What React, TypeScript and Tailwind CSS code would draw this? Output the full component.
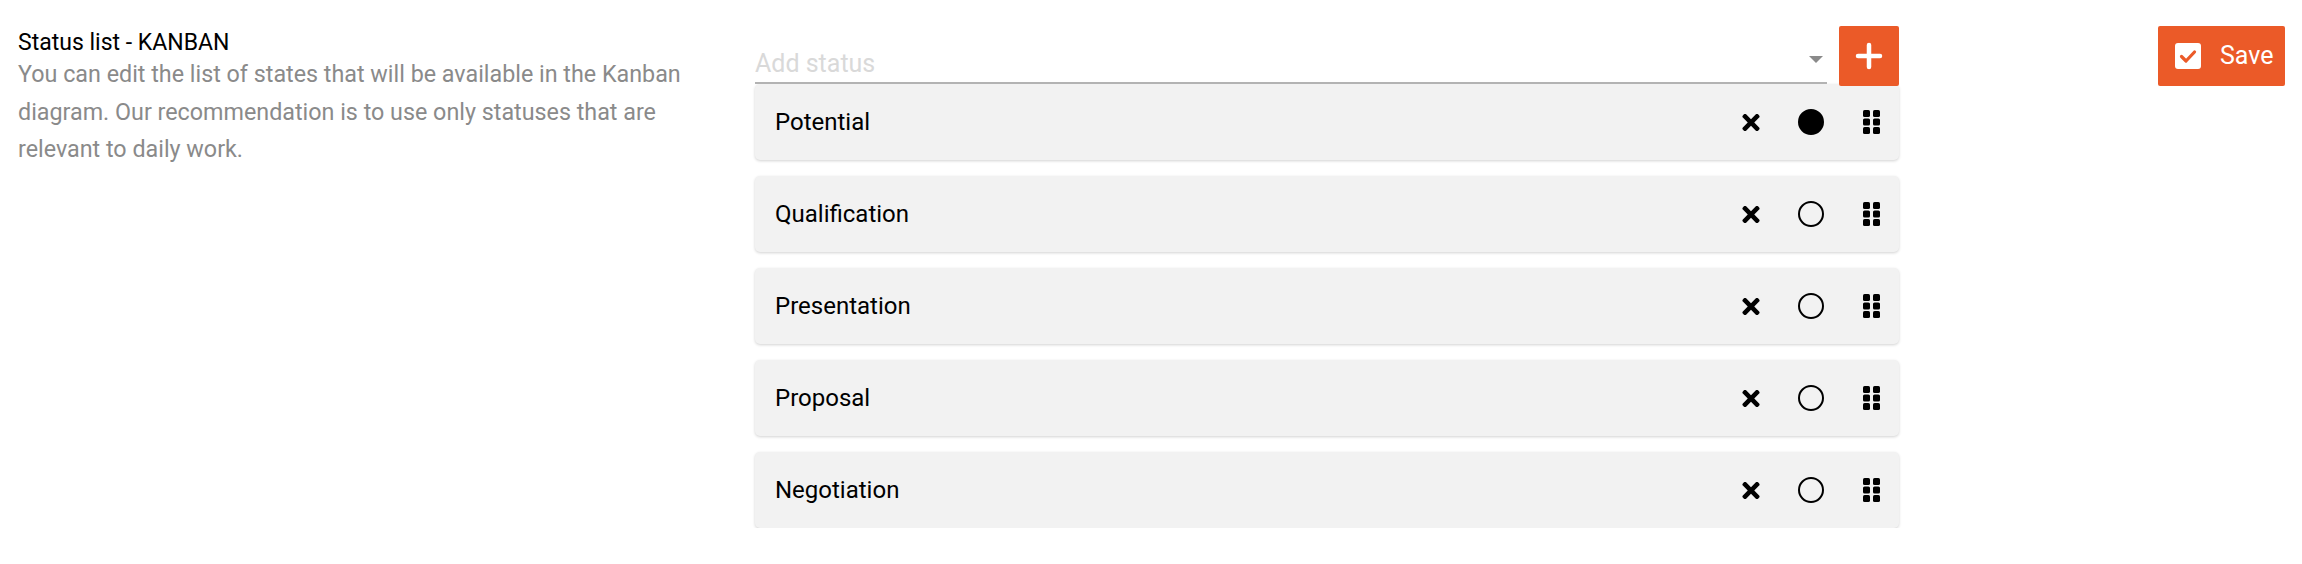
import React from 'react';
import { FaTimes } from 'react-icons/fa';

type Status = {
  id: string;
  name: string;
  active: boolean;
};

const statuses: Status[] = [
  { id: '1', name: 'Potential', active: true },
  { id: '2', name: 'Qualification', active: false },
  { id: '3', name: 'Presentation', active: false },
  { id: '4', name: 'Proposal', active: false },
  { id: '5', name: 'Negotiation', active: false },
];

const GripIcon = () => (
  <svg width="17" height="24" viewBox="0 0 17 24" fill="#000">
    <rect x="0" y="0" width="7" height="7" rx="1.6" />
    <rect x="10" y="0" width="7" height="7" rx="1.6" />
    <rect x="0" y="8.5" width="7" height="7" rx="1.6" />
    <rect x="10" y="8.5" width="7" height="7" rx="1.6" />
    <rect x="0" y="17" width="7" height="7" rx="1.6" />
    <rect x="10" y="17" width="7" height="7" rx="1.6" />
  </svg>
);

const CircleIcon = ({ filled }: { filled: boolean }) => (
  <svg width="28" height="28" viewBox="0 0 28 28">
    <circle cx="14" cy="14" r="12" fill={filled ? '#000' : 'none'} stroke="#000" strokeWidth="2" />
  </svg>
);

const PlusIcon = () => (
  <svg width="28" height="28" viewBox="0 0 28 28" stroke="#fff" strokeWidth="4.5" strokeLinecap="round">
    <line x1="14" y1="3" x2="14" y2="25" />
    <line x1="3" y1="14" x2="25" y2="14" />
  </svg>
);

const CheckBoxIcon = () => (
  <svg width="26" height="26" viewBox="0 0 26 26">
    <rect x="0" y="0" width="26" height="26" rx="3" fill="#fff" />
    <path d="M6.5 13.5 L11 18 L19.5 9" fill="none" stroke="#eb5a28" strokeWidth="3.2" strokeLinecap="round" strokeLinejoin="round" />
  </svg>
);

const StatusRow = ({ status }: { status: Status }) => (
  <div className="flex h-[76px] items-center rounded-[5px] bg-[#f2f2f2] pl-[20px] pr-[19px] shadow-[0_1px_3px_rgba(0,0,0,0.18)]">
    <span className="flex-1 text-[24px] text-black">{status.name}</span>
    <div className="flex items-center">
      <button className="flex w-[20px] justify-center">
        <FaTimes size={25} color="#000" />
      </button>
      <button className="ml-[36px] flex">
        <CircleIcon filled={status.active} />
      </button>
      <button className="ml-[38px] flex">
        <GripIcon />
      </button>
    </div>
  </div>
);

export default function App() {
  return (
    <div className="flex w-[2302px] bg-white pl-[18px] pr-[17px] pt-[26px] font-['Roboto','Liberation_Sans',sans-serif]">
      <div className="w-[737px] pr-[40px] pt-[2px]">
        <h2 className="text-[23px] leading-[30px] text-black">Status list - KANBAN</h2>
        <p className="-mt-[2px] text-[23.3px] leading-[37.5px] text-[#8a8a8a]">
          You can edit the list of states that will be available in the Kanban diagram. Our recommendation is to use
          only statuses that are relevant to daily work.
        </p>
      </div>

      <div className="w-[1144px]">
        <div className="flex items-start">
          <div className="relative flex h-[58px] flex-1 items-end border-b-2 border-[#b3b3b3] pb-[2px]">
            <input
              placeholder="Add status"
              className="w-full bg-transparent text-[25px] leading-[32px] text-black outline-none placeholder:text-[#d9d9d9]"
            />
            <span className="absolute right-[4px] top-[30px] h-0 w-0 border-x-[7.5px] border-t-[7px] border-x-transparent border-t-[#8a8a8a]" />
          </div>
          <button className="relative z-10 ml-[12px] flex h-[60px] w-[60px] items-center justify-center rounded-[2px] bg-[#eb5a28]">
            <PlusIcon />
          </button>
        </div>
        <div className="-mt-[2px] flex flex-col gap-[16px]">
          {statuses.map((status) => (
            <StatusRow key={status.id} status={status} />
          ))}
        </div>
      </div>

      <div className="flex flex-1 justify-end">
        <button className="flex h-[60px] w-[127px] items-center gap-[19px] rounded-[2px] bg-[#eb5a28] pl-[17px]">
          <CheckBoxIcon />
          <span className="text-[25px] text-white">Save</span>
        </button>
      </div>
    </div>
  );
}
